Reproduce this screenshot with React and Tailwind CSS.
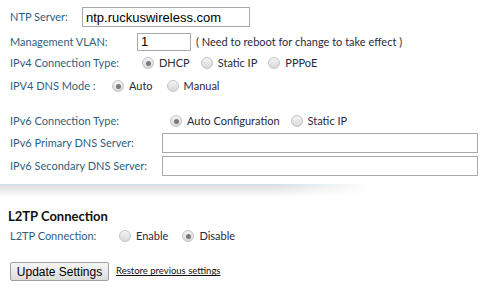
import React from 'react';

const label = 'text-[11px] text-[#2f5f80] shrink-0';
const val = 'text-[11px] text-[#2a2a3a]';

const Radio = ({ checked }) => (
  <span className="inline-flex items-center justify-center w-[12px] h-[12px] rounded-full border border-[#c4c4c4] bg-[linear-gradient(to_bottom,#f4f4f4,#d9d9d9)] shrink-0">
    {checked && <span className="w-[5px] h-[5px] rounded-full bg-[#7a7a7a]" />}
  </span>
);

const Option = ({ checked, text, className = '' }) => (
  <span className={`inline-flex items-center gap-[5px] ${className}`}>
    <Radio checked={checked} />
    <span className={val}>{text}</span>
  </span>
);

export default function App() {
  return (
    <div className="w-[490px] h-[295px] bg-white overflow-hidden font-['Lato',sans-serif]">
      <div className="pl-[10px] pt-[7px]">
        <div className="flex items-center h-[20px]">
          <span className={`${label} w-[72px]`}>NTP Server:</span>
          <input
            defaultValue="ntp.ruckuswireless.com"
            className="w-[168px] h-[20px] border border-[#a9a9a9] px-[3px] text-[13px] text-black font-['Liberation_Sans',sans-serif] outline-none"
          />
        </div>
        <div className="flex items-center h-[18px] mt-[6px]">
          <span className={`${label} w-[127px]`}>Management VLAN:</span>
          <input
            defaultValue="1"
            className="w-[54px] h-[18px] border border-[#a9a9a9] px-[3px] text-[13px] text-black font-['Liberation_Sans',sans-serif] outline-none"
          />
          <span className={`${val} ml-[5px]`}>( Need to reboot for change to take effect )</span>
        </div>
        <div className="flex items-center h-[18px] mt-[3px]">
          <span className={`${label} w-[132px]`}>IPv4 Connection Type:</span>
          <Option checked text="DHCP" />
          <Option text="Static IP" className="ml-[11px]" />
          <Option text="PPPoE" className="ml-[11px]" />
        </div>
        <div className="flex items-center h-[18px] mt-[5px]">
          <span className={`${label} w-[102px]`}>IPV4 DNS Mode :</span>
          <Option checked text="Auto" />
          <Option text="Manual" className="ml-[14px]" />
        </div>
        <div className="flex items-center h-[18px] mt-[17px]">
          <span className={`${label} w-[160px]`}>IPv6 Connection Type:</span>
          <Option checked text="Auto Configuration" />
          <Option text="Static IP" className="ml-[11px]" />
        </div>
        <div className="flex items-center h-[20px] mt-[3px]">
          <span className={`${label} w-[152px]`}>IPv6 Primary DNS Server:</span>
          <input className="w-[316px] h-[20px] border border-[#a9a9a9] outline-none" />
        </div>
        <div className="flex items-center h-[20px] mt-[3px]">
          <span className={`${label} w-[152px]`}>IPv6 Secondary DNS Server:</span>
          <input className="w-[316px] h-[20px] border border-[#a9a9a9] outline-none" />
        </div>
      </div>

      <div className="mt-[8px] w-[370px] [mask-image:linear-gradient(to_right,black_75%,transparent)]">
        <div className="h-[1px] bg-[#cde4ee]" />
        <div className="h-[12px] bg-[linear-gradient(to_bottom,#dedede,#ffffff)]" />
      </div>

      <div className="pl-[8px] mt-[10px]">
        <div className="text-[13px] font-bold text-[#111] leading-[18px]">L2TP Connection</div>
        <div className="flex items-center h-[18px] pl-[2px] mt-[2px]">
          <span className={`${label} w-[109px]`}>L2TP Connection:</span>
          <Option text="Enable" />
          <Option checked text="Disable" className="ml-[14px]" />
        </div>
        <div className="flex items-center mt-[17px] pl-[2px]">
          <button className="h-[19px] w-[99px] border border-[#a0a0a0] rounded-[2px] bg-[linear-gradient(to_bottom,#f6f6f6,#dcdcdc)] text-[12px] text-black font-['Liberation_Sans',sans-serif] leading-none">
            Update Settings
          </button>
          <a href="#" className="ml-[7px] text-[9.5px] text-[#111] underline">Restore previous settings</a>
        </div>
      </div>
    </div>
  );
}
